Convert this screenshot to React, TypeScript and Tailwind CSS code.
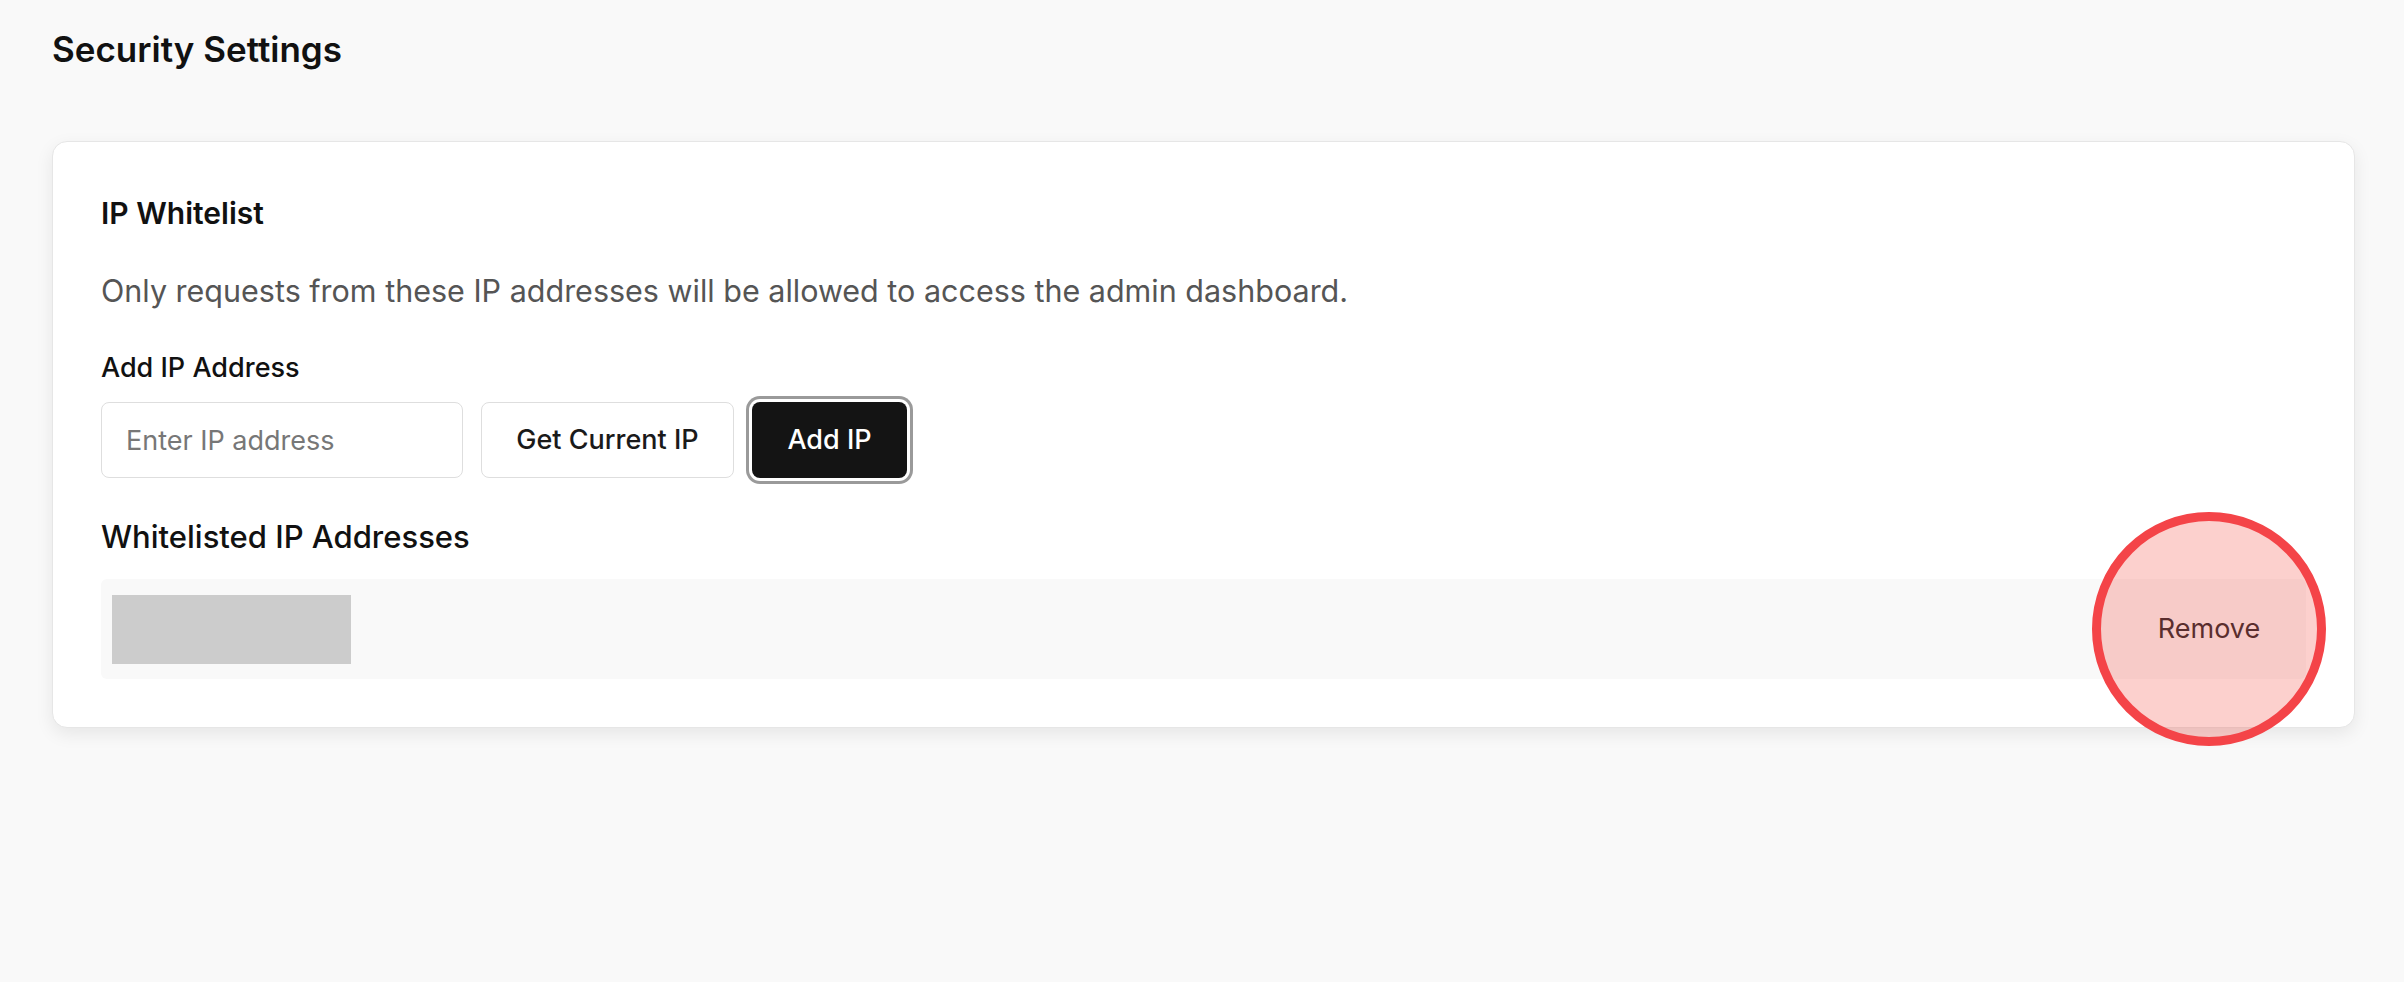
export default function App() {
  return (
    <div className="min-h-screen w-full bg-[#f9f9f9] pl-[52px] pr-[49px] pt-[28px] font-['Inter',sans-serif] text-[#111]">
      <h1 className="text-[35px] font-semibold leading-[42px] text-[#111]">Security Settings</h1>

      <div className="mt-[71px] rounded-[15px] border border-[#e6e6e6] bg-white px-[48px] pt-[48px] pb-[48px] shadow-[0_6px_18px_rgba(0,0,0,0.08)]">
        <h2 className="text-[30px] font-semibold leading-[46px] text-[#111]">IP Whitelist</h2>
        <p className="mt-[34px] text-[30.5px] leading-[42px] text-[#555]">
          Only requests from these IP addresses will be allowed to access the admin dashboard.
        </p>

        <label className="mt-[38px] block text-[27px] font-medium leading-[36px] text-[#111]">Add IP Address</label>
        <div className="mt-[16px] flex items-center gap-[18px]">
          <input
            placeholder="Enter IP address"
            className="h-[76px] w-[362px] rounded-[8px] border border-[#dedede] bg-white px-[24px] text-[27px] text-[#111] outline-none placeholder:text-[#777]"
          />
          <button className="h-[76px] w-[253px] rounded-[8px] border border-[#dedede] bg-white text-[27px] font-medium text-[#1a1a1a]">
            Get Current IP
          </button>
          <button className="h-[76px] w-[155px] rounded-[8px] bg-[#141414] text-[27px] font-medium text-white ring-[3px] ring-[#9a9a9a] ring-offset-[3px] ring-offset-white">
            Add IP
          </button>
        </div>

        <h3 className="mt-[38px] text-[31px] font-medium leading-[42px] text-[#111]">Whitelisted IP Addresses</h3>
        <div className="relative mt-[21px] flex h-[100px] items-center rounded-[6px] bg-[#f9f9f9] px-[11px]">
          <div className="h-[69px] w-[239px] bg-[#cccccc]" />

          <div className="absolute right-[-20px] top-1/2 flex h-[234px] w-[234px] -translate-y-1/2 items-center justify-center rounded-full border-[9px] border-[#f44448] bg-[rgba(244,67,54,0.25)]">
            <span className="text-[27px] text-[#5a2e2e]">Remove</span>
          </div>
        </div>
      </div>
    </div>
  );
}
